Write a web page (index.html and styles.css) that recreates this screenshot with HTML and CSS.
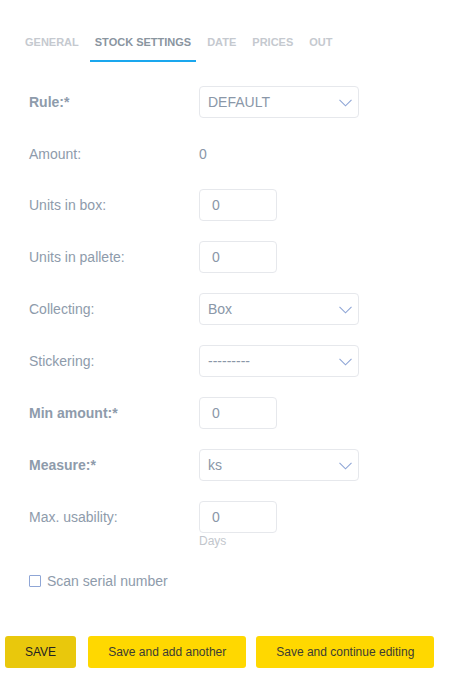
FILE: index.html
```html
<!DOCTYPE html>
<html>
<head>
<meta charset="utf-8">
<link rel="stylesheet" href="styles.css">
</head>
<body>
<nav class="tabs">
  <span class="tab">GENERAL</span>
  <span class="tab active">STOCK SETTINGS</span>
  <span class="tab">DATE</span>
  <span class="tab">PRICES</span>
  <span class="tab">OUT</span>
</nav>
<form class="form">
  <div class="row">
    <label class="label bold">Rule:*</label>
    <div class="select"><span>DEFAULT</span><svg class="chev" width="13" height="8" viewBox="0 0 13 8"><path d="M0.5 0.8 L6.5 6.8 L12.5 0.8" fill="none" stroke="#8fa6d6" stroke-width="1.1"/></svg></div>
  </div>
  <div class="row short">
    <label class="label">Amount:</label>
    <span class="value">0</span>
  </div>
  <div class="row">
    <label class="label">Units in box:</label>
    <div class="input">0</div>
  </div>
  <div class="row">
    <label class="label">Units in pallete:</label>
    <div class="input">0</div>
  </div>
  <div class="row">
    <label class="label">Collecting:</label>
    <div class="select"><span>Box</span><svg class="chev" width="13" height="8" viewBox="0 0 13 8"><path d="M0.5 0.8 L6.5 6.8 L12.5 0.8" fill="none" stroke="#8fa6d6" stroke-width="1.1"/></svg></div>
  </div>
  <div class="row">
    <label class="label">Stickering:</label>
    <div class="select"><span>---------</span><svg class="chev" width="13" height="8" viewBox="0 0 13 8"><path d="M0.5 0.8 L6.5 6.8 L12.5 0.8" fill="none" stroke="#8fa6d6" stroke-width="1.1"/></svg></div>
  </div>
  <div class="row">
    <label class="label bold">Min amount:*</label>
    <div class="input">0</div>
  </div>
  <div class="row">
    <label class="label bold">Measure:*</label>
    <div class="select"><span>ks</span><svg class="chev" width="13" height="8" viewBox="0 0 13 8"><path d="M0.5 0.8 L6.5 6.8 L12.5 0.8" fill="none" stroke="#8fa6d6" stroke-width="1.1"/></svg></div>
  </div>
  <div class="row top">
    <label class="label">Max. usability:</label>
    <div class="field">
      <div class="input">0</div>
      <div class="hint">Days</div>
    </div>
  </div>
  <div class="check-row">
    <span class="checkbox"></span>
    <span class="check-label">Scan serial number</span>
  </div>
</form>
<div class="actions">
  <button type="button" class="btn btn-save">SAVE</button>
  <button type="button" class="btn">Save and add another</button>
  <button type="button" class="btn btn-last">Save and continue editing</button>
</div>
</body>
</html>
```

FILE: styles.css
```css
html, body {
  margin: 0;
  padding: 0;
  background: #ffffff;
}
body {
  font-family: "Liberation Sans", Arial, sans-serif;
  color: #8a97a8;
  width: 466px;
  height: 691px;
  overflow: hidden;
}
.tabs {
  display: flex;
  gap: 6px;
  padding: 30px 0 0 20px;
}
.tab {
  font-size: 11px;
  font-weight: bold;
  line-height: 13px;
  padding: 6px 5px 11px;
  border-bottom: 2px solid transparent;
  color: #c5c9cf;
}
.tab.active {
  color: #8a959f;
  border-bottom-color: #1aa7ee;
}
.form {
  margin: 24px 0 0;
  padding-left: 29px;
}
.row {
  display: flex;
  align-items: center;
  height: 32px;
  margin-bottom: 20px;
}
.row.short {
  height: 31px;
}
.row.top {
  align-items: flex-start;
  height: auto;
  margin-bottom: 0;
}
.label {
  width: 170px;
  flex: none;
  font-size: 14px;
  line-height: 32px;
  color: #8e9bab;
}
.label.bold {
  font-weight: bold;
}
.value {
  font-size: 14px;
  color: #8a97a8;
}
.select {
  box-sizing: border-box;
  width: 160px;
  height: 32px;
  border: 1px solid #e6e8ec;
  border-radius: 4px;
  display: flex;
  align-items: center;
  justify-content: space-between;
  padding: 0 6px 0 8px;
  font-size: 14px;
  color: #8a97a8;
}
.chev {
  display: block;
  margin-top: 1px;
}
.input {
  box-sizing: border-box;
  width: 78px;
  height: 32px;
  border: 1px solid #e6e8ec;
  border-radius: 4px;
  padding: 0 12px;
  font-size: 14px;
  line-height: 30px;
  color: #8a97a8;
}
.hint {
  font-size: 12px;
  line-height: 15px;
  color: #c2c6cc;
  margin-top: 1px;
}
.check-row {
  display: flex;
  align-items: center;
  gap: 6px;
  margin-top: 24px;
  height: 16px;
}
.checkbox {
  box-sizing: border-box;
  width: 12px;
  height: 12px;
  border: 1.5px solid #8fa6d6;
  border-radius: 1px;
}
.check-label {
  font-size: 14px;
  color: #8e9bab;
}
.actions {
  display: flex;
  gap: 12px;
  padding: 47px 0 0 5px;
}
.btn {
  font-family: "Liberation Sans", Arial, sans-serif;
  font-size: 12px;
  height: 32px;
  padding: 0 20px;
  border: none;
  border-radius: 3px;
  background: #ffd800;
  color: #3c3c34;
}
.btn-last {
  margin-left: -2px;
}
.btn-save {
  background: #e9c80c;
  color: #222222;
  padding: 0 20px;
}
```
